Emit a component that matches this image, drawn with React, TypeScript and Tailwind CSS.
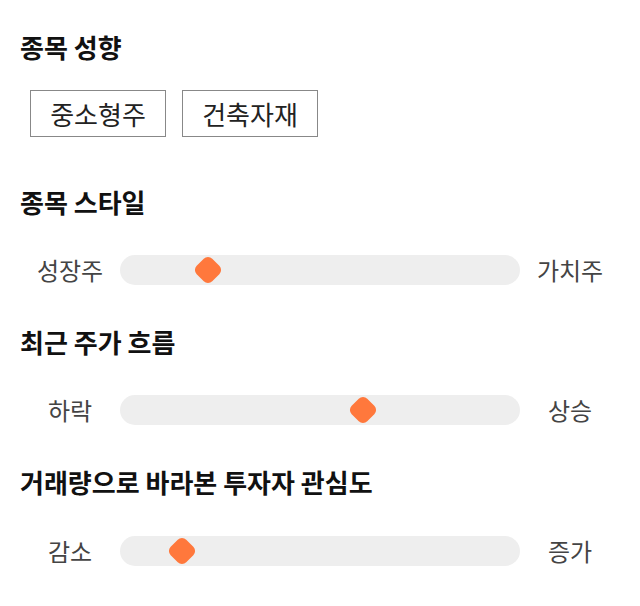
const font = { fontFamily: '"Noto Sans CJK KR", "Noto Sans", sans-serif' };

function Heading({ children, className = "" }: { children: string; className?: string }) {
  return (
    <h2 className={`h-[30px] leading-[30px] text-[26px] font-bold text-[#111] ${className}`}>
      {children}
    </h2>
  );
}

function Slider({ left, right, thumb, className = "" }: { left: string; right: string; thumb: string; className?: string }) {
  return (
    <div className={`flex items-center h-[30px] ${className}`}>
      <div className="w-[100px] text-center text-[24px] text-[#444]">{left}</div>
      <div className="relative w-[400px] h-[30px] rounded-full bg-[#eeeeee]">
        <div className={`absolute top-[4px] ${thumb} w-[22px] h-[22px] rounded-[6px] rotate-45 bg-[#ff783c]`} />
      </div>
      <div className="w-[100px] text-center text-[24px] text-[#444]">{right}</div>
    </div>
  );
}

export default function App() {
  return (
    <div className="w-[640px] h-[606px] bg-white px-5 pt-[32px]" style={font}>
      <Heading>종목 성향</Heading>
      <div className="flex gap-4 mt-[28px] ml-[10px]">
        {["중소형주", "건축자재"].map((t) => (
          <div
            key={t}
            className="w-[136px] h-[47px] border border-[#888] flex items-center justify-center text-[26px] text-[#222]"
          >
            {t}
          </div>
        ))}
      </div>
      <Heading className="mt-[50px]">종목 스타일</Heading>
      <Slider className="mt-[38px]" left="성장주" right="가치주" thumb="left-[77px]" />
      <Heading className="mt-[42px]">최근 주가 흐름</Heading>
      <Slider className="mt-[38px]" left="하락" right="상승" thumb="left-[232px]" />
      <Heading className="mt-[42px]">거래량으로 바라본 투자자 관심도</Heading>
      <Slider className="mt-[39px]" left="감소" right="증가" thumb="left-[51px]" />
    </div>
  );
}
